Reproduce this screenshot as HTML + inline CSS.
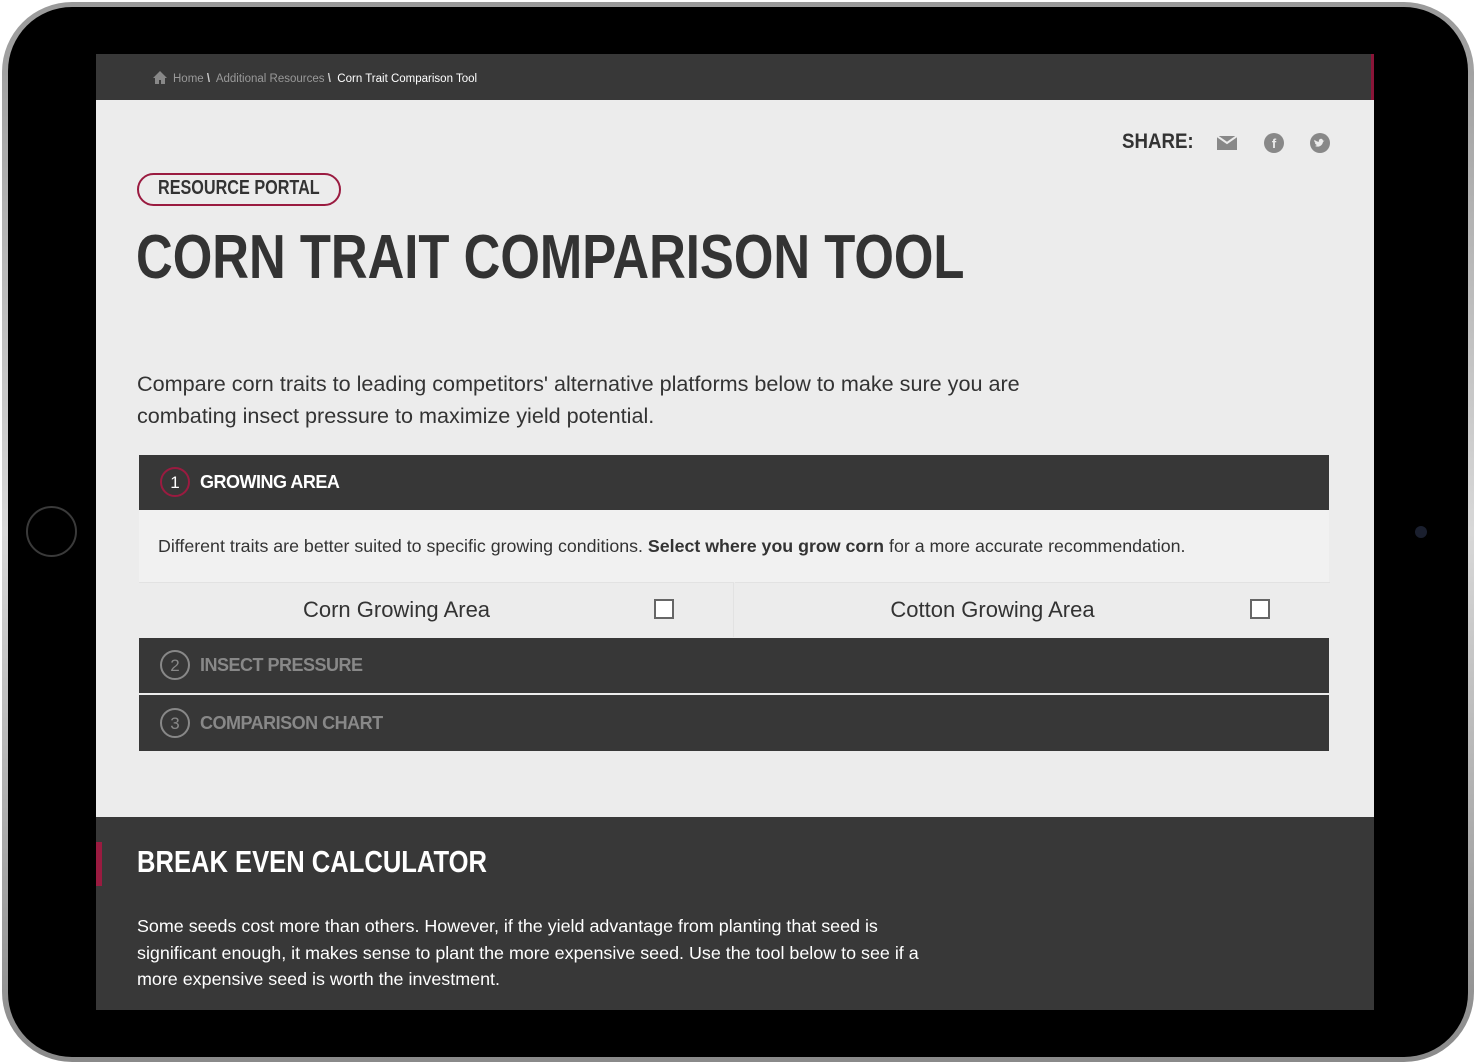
<!DOCTYPE html>
<html><head><meta charset="utf-8"><style>
*{margin:0;padding:0;box-sizing:border-box}
body{width:1476px;height:1064px;background:#fff;position:relative;overflow:hidden;font-family:"Liberation Sans",sans-serif}
.frame{position:absolute;left:2px;top:2px;width:1472px;height:1060px;border-radius:70px;background:linear-gradient(#9a9a9a,#d8d8d8 50%,#8a8a8a);}
.bezel{position:absolute;left:8px;top:7px;width:1460px;height:1050px;border-radius:64px;background:#000}
.screen{position:absolute;left:96px;top:54px;width:1278px;height:956px;background:#ececec;overflow:hidden}
.a{position:absolute}
.n{font-weight:bold;transform-origin:0 0;white-space:nowrap}
.bar{position:absolute;left:43px;width:1190px;background:#373737}
.circ{position:absolute;left:21px;width:30px;height:30px;border-radius:50%;font-size:17px;text-align:center;line-height:27px}
</style></head><body>
<div class="frame"></div><div class="bezel"></div>
<div class="a" style="left:26px;top:506px;width:51px;height:51px;border-radius:50%;border:2px solid #3a3a3a"></div>
<div class="a" style="left:1415px;top:526px;width:12px;height:12px;border-radius:50%;background:#1a1f2e"></div>
<div class="screen">
 <div class="a" style="left:0;top:0;width:1278px;height:46px;background:#383838"></div>
 <div class="a" style="left:1275px;top:0;width:3px;height:46px;background:#8a1538"></div>
 <svg class="a" style="left:57px;top:17px" width="14" height="13" viewBox="0 0 14 13"><path d="M7 0L0 7h2v6h4V9h2v4h4V7h2z" fill="#888"/></svg>
 <div class="a" style="left:77px;top:19px;font-size:11.5px;color:#999;white-space:nowrap">Home <b style="color:#ccc">\</b>&nbsp; Additional Resources <b style="color:#ccc">\</b>&nbsp; <span style="color:#fff">Corn Trait Comparison Tool</span></div>
 <div class="a n" style="left:1026px;top:76px;font-size:21px;color:#333;transform:scaleX(0.89)">SHARE:</div>
 <svg class="a" style="left:1121px;top:82px" width="20" height="14" viewBox="0 0 20 14"><rect width="20" height="14" fill="#888"/><path d="M0 0l10 7 10-7" stroke="#ececec" stroke-width="2" fill="none"/></svg>
 <div class="a" style="left:1168px;top:79px;width:20px;height:20px;border-radius:50%;background:#888;color:#ececec;font-size:13px;font-weight:bold;text-align:center;line-height:21px">f</div>
 <div class="a" style="left:1214px;top:79px;width:20px;height:20px;border-radius:50%;background:#888"><svg width="20" height="20" viewBox="0 0 20 20"><path d="M5 13c3 1.5 7 0.5 8-4l1.5-1.5-1.5.3c0-1-1-2-2-2-1.5 0-2.5 1.5-2 3-2 0-3.5-1-4.5-2-.5 1.5 0 2.5 1 3.2H5c.2 1 1 1.8 2 2-.8.6-1.5.8-2 1z" fill="#ececec"/></svg></div>
 <div class="a" style="left:41px;top:119px;width:204px;height:33px;border:2px solid #9a1b40;border-radius:17px"></div>
 <div class="a n" style="left:62px;top:123px;font-size:20px;color:#333;transform:scaleX(0.81)">RESOURCE PORTAL</div>
 <div class="a n" style="left:40px;top:168px;font-size:62px;color:#333;transform:scaleX(0.82)">CORN TRAIT COMPARISON TOOL</div>
 <div class="a" style="left:41px;top:314px;font-size:21.6px;line-height:32px;color:#333;width:920px">Compare corn traits to leading competitors' alternative platforms below to make sure you are combating insect pressure to maximize yield potential.</div>
 <div class="bar" style="top:401px;height:55px">
  <div class="circ" style="top:12px;border:2px solid #9a1b40;color:#fff">1</div>
  <div class="a" style="left:61px;top:17px;font-size:18px;font-weight:bold;color:#fff;letter-spacing:-0.5px">GROWING AREA</div>
 </div>
 <div class="a" style="left:43px;top:456px;width:1190px;height:72px;background:#f1f1f1"></div>
 <div class="a" style="left:62px;top:482px;font-size:17.8px;color:#333;white-space:nowrap">Different traits are better suited to specific growing conditions. <b>Select where you grow corn</b> for a more accurate recommendation.</div>
 <div class="a" style="left:43px;top:528px;width:595px;height:55px;background:#ececec;border-top:1px solid #e2e2e2;border-right:1px solid #e2e2e2"></div>
 <div class="a" style="left:639px;top:528px;width:595px;height:55px;background:#ececec;border-top:1px solid #e2e2e2"></div>
 <div class="a" style="left:43px;top:543px;width:515px;text-align:center;font-size:22px;color:#333">Corn Growing Area</div>
 <div class="a" style="left:639px;top:543px;width:515px;text-align:center;font-size:22px;color:#333">Cotton Growing Area</div>
 <div class="a" style="left:558px;top:545px;width:20px;height:20px;border:2px solid #666;background:#fff"></div>
 <div class="a" style="left:1154px;top:545px;width:20px;height:20px;border:2px solid #666;background:#fff"></div>
 <div class="bar" style="top:584px;height:55px">
  <div class="circ" style="top:12px;border:2px solid #888;color:#888">2</div>
  <div class="a" style="left:61px;top:17px;font-size:18px;font-weight:bold;color:#888;letter-spacing:-0.5px">INSECT PRESSURE</div>
 </div>
 <div class="bar" style="top:641px;height:56px">
  <div class="circ" style="top:13px;border:2px solid #888;color:#888">3</div>
  <div class="a" style="left:61px;top:18px;font-size:18px;font-weight:bold;color:#888;letter-spacing:-0.5px">COMPARISON CHART</div>
 </div>
 <div class="a" style="left:0;top:763px;width:1278px;height:193px;background:#383838"></div>
 <div class="a" style="left:0;top:788px;width:6px;height:44px;background:#9a1b40"></div>
 <div class="a n" style="left:41px;top:790px;font-size:31px;color:#fff;transform:scaleX(0.825)">BREAK EVEN CALCULATOR</div>
 <div class="a" style="left:41px;top:859px;width:820px;font-size:17.9px;line-height:26.5px;color:#fff">Some seeds cost more than others. However, if the yield advantage from planting that seed is significant enough, it makes sense to plant the more expensive seed. Use the tool below to see if a more expensive seed is worth the investment.</div>
</div>
</body></html>
